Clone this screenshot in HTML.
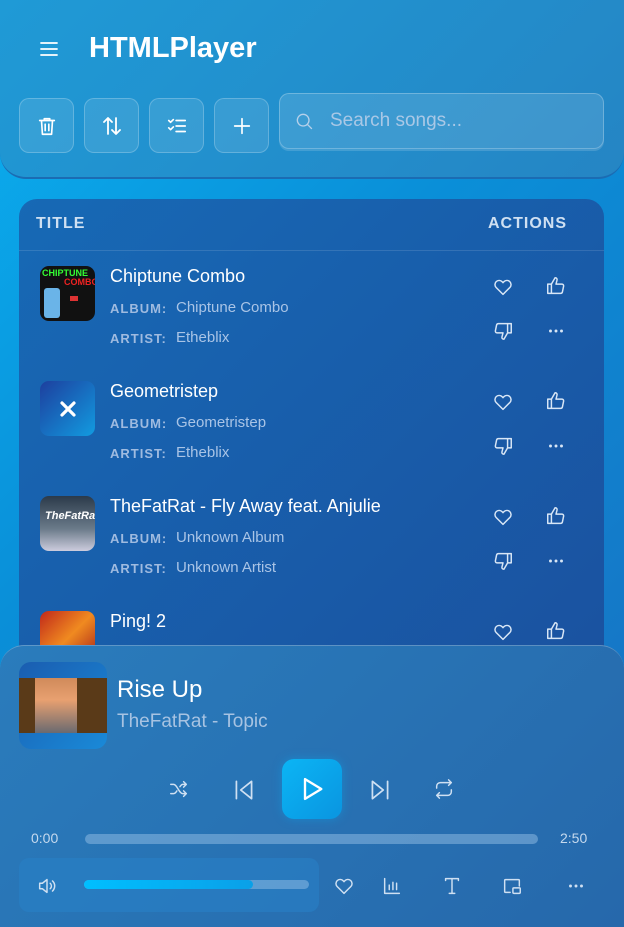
<!DOCTYPE html>
<html><head><meta charset="utf-8"><style>
*{margin:0;padding:0;box-sizing:border-box}
body{width:624px;height:927px;overflow:hidden;font-family:"Liberation Sans",sans-serif;color:#fff;background:linear-gradient(135deg,#0bb0f0 0%,#0a8fd8 40%,#1a6ec0 100%);position:relative}
.abs{position:absolute}
svg{fill:none;stroke:currentColor;stroke-width:1.6;stroke-linecap:round;stroke-linejoin:round}
.header{left:0;top:0;width:624px;height:179px;background:linear-gradient(135deg,#1f9ad6,#2585c4);border-radius:0 0 26px 26px;border-bottom:2px solid #1b6cb3}
.btn{width:55px;height:55px;top:98px;border:1px solid rgba(255,255,255,.22);background:rgba(255,255,255,.1);border-radius:10px;display:flex;align-items:center;justify-content:center;color:#fff}
.search{left:279px;top:93px;width:325px;height:56px;border:1px solid rgba(255,255,255,.25);background:rgba(255,255,255,.12);border-radius:10px;box-shadow:0 2px 0 rgba(255,255,255,.15)}
.table{left:19px;top:199px;width:585px;height:470px;background:linear-gradient(135deg,#1769b5,#1a52a0);border-radius:18px;overflow:hidden}
.th{top:16px;font-size:16px;font-weight:bold;letter-spacing:1px;color:#cfe0f2}
.row .thumb{left:21px;width:55px;height:55px;border-radius:9px;overflow:hidden}
.t{font-size:18px;color:#fff}
.lbl{font-size:13px;font-weight:bold;letter-spacing:1px;color:#9fbbe0}
.val{font-size:15px;color:#a9c4e6}
.ic{color:#d8e6f6;width:22px;height:22px}
.player{left:0;top:645px;width:624px;height:282px;background:linear-gradient(135deg,#2a7cbc,#2668ab);border-radius:24px 24px 0 0;border-top:1px solid rgba(255,255,255,.25)}
.pc{color:#cfe0f2}
</style></head><body>
<div class="abs header">
  <svg class="abs" style="left:38px;top:38px" width="22" height="22" viewBox="0 0 22 22"><path d="M3 5h16M3 11h16M3 17h16" stroke-width="1.8"/></svg>
  <div class="abs" style="left:89px;top:32px;font-size:29px;font-weight:bold">HTMLPlayer</div>
  <div class="abs btn" style="left:19px"><svg width="22" height="22" viewBox="0 0 24 24"><path d="M4 6h16M9 6V4h6v2M6 6l1 15h10l1-15M10 10v7M14 10v7" stroke-width="1.8"/></svg></div>
  <div class="abs btn" style="left:84px"><svg width="24" height="24" viewBox="0 0 24 24"><path d="M8 20V4M4 8l4-4 4 4M16 4v16M12 16l4 4 4-4" stroke-width="1.8"/></svg></div>
  <div class="abs btn" style="left:149px"><svg width="22" height="22" viewBox="0 0 24 24"><path d="M3 6l2 2 3-3M3 14l2 2 3-3M11 6h10M11 12h10M11 18h10" stroke-width="1.8"/></svg></div>
  <div class="abs btn" style="left:214px"><svg width="22" height="22" viewBox="0 0 24 24"><path d="M12 4v16M4 12h16" stroke-width="1.8"/></svg></div>
  <div class="abs search">
    <svg class="abs" style="left:14px;top:17px;color:#b5d0ea" width="20" height="20" viewBox="0 0 24 24"><circle cx="11" cy="11" r="7"/><path d="M16 16l5 5"/></svg>
    <div class="abs" style="left:50px;top:16px;font-size:19px;color:#a9c8e6">Search songs...</div>
  </div>
</div>

<div class="abs table">
  <div class="abs th" style="left:17px">TITLE</div>
  <div class="abs th" style="left:469px">ACTIONS</div>
  <div class="abs" style="left:0;top:51px;width:585px;height:1px;background:rgba(255,255,255,.12)"></div>

  <div class="abs row" style="left:0;top:67px;width:585px">
    <div class="abs thumb" style="top:0;background:#111"><div class="abs" style="left:2px;top:2px;font-size:9px;font-weight:bold;color:#3f3">CHIPTUNE</div><div class="abs" style="left:24px;top:11px;font-size:9px;font-weight:bold;color:#e22">COMBO</div><div class="abs" style="left:4px;top:22px;width:16px;height:30px;background:#6ab4e8;border-radius:3px"></div><div class="abs" style="left:30px;top:30px;width:8px;height:5px;background:#d33"></div></div>
    <div class="abs t" style="left:91px;top:0">Chiptune Combo</div>
    <div class="abs lbl" style="left:91px;top:35px">ALBUM:</div><div class="abs val" style="left:157px;top:33px">Chiptune Combo</div>
    <div class="abs lbl" style="left:91px;top:65px">ARTIST:</div><div class="abs val" style="left:157px;top:63px">Etheblix</div>
  </div>
  <div class="abs row" style="left:0;top:182px;width:585px">
    <div class="abs thumb" style="top:0;background:linear-gradient(135deg,#1d3f9e,#129be0);display:flex;align-items:center;justify-content:center"><svg width="18" height="18" viewBox="0 0 18 18" style="stroke-width:3.2"><path d="M3 3l12 12M15 3L3 15"/></svg></div>
    <div class="abs t" style="left:91px;top:0">Geometristep</div>
    <div class="abs lbl" style="left:91px;top:35px">ALBUM:</div><div class="abs val" style="left:157px;top:33px">Geometristep</div>
    <div class="abs lbl" style="left:91px;top:65px">ARTIST:</div><div class="abs val" style="left:157px;top:63px">Etheblix</div>
  </div>
  <div class="abs row" style="left:0;top:297px;width:585px">
    <div class="abs thumb" style="top:0;background:linear-gradient(180deg,#2b3a4a,#6b7b8a 60%,#ccd 100%)"><div class="abs" style="left:5px;top:14px;font-size:11px;font-style:italic;font-weight:bold;color:#fff">TheFatRat</div></div>
    <div class="abs t" style="left:91px;top:0">TheFatRat - Fly Away feat. Anjulie</div>
    <div class="abs lbl" style="left:91px;top:35px">ALBUM:</div><div class="abs val" style="left:157px;top:33px">Unknown Album</div>
    <div class="abs lbl" style="left:91px;top:65px">ARTIST:</div><div class="abs val" style="left:157px;top:63px">Unknown Artist</div>
  </div>
  <div class="abs row" style="left:0;top:412px;width:585px">
    <div class="abs thumb" style="top:0;background:linear-gradient(135deg,#c0281a,#f08a20 50%,#a01a1a)"></div>
    <div class="abs t" style="left:91px;top:0">Ping! 2</div>
  </div>

  <svg class="abs ic" style="left:473px;top:77px" viewBox="0 0 24 24"><path d="M12 20l-7.5-7.5a4.5 4.5 0 016.5-6.3L12 7.3l1-1.1a4.5 4.5 0 016.5 6.3z"/></svg>
  <svg class="abs ic" style="left:526px;top:76px" viewBox="0 0 24 24"><path d="M7 10v10H3V10zM7 10l4-7c2 0 2.5 1.5 2 3l-1 4h6.5c1.2 0 2 1 1.8 2.2l-1.3 6.3c-.2 1-1 1.5-2 1.5H7"/></svg>
  <svg class="abs ic" style="left:473px;top:121px" viewBox="0 0 24 24"><path d="M17 14V4h4v10zM17 14l-4 7c-2 0-2.5-1.5-2-3l1-4H5.5c-1.2 0-2-1-1.8-2.2L5 5.5C5.2 4.5 6 4 7 4h10"/></svg>
  <svg class="abs ic" style="left:526px;top:121px" viewBox="0 0 24 24"><circle cx="6" cy="12" r=".8" fill="currentColor"/><circle cx="12" cy="12" r=".8" fill="currentColor"/><circle cx="18" cy="12" r=".8" fill="currentColor"/></svg>

  <svg class="abs ic" style="left:473px;top:192px" viewBox="0 0 24 24"><path d="M12 20l-7.5-7.5a4.5 4.5 0 016.5-6.3L12 7.3l1-1.1a4.5 4.5 0 016.5 6.3z"/></svg>
  <svg class="abs ic" style="left:526px;top:191px" viewBox="0 0 24 24"><path d="M7 10v10H3V10zM7 10l4-7c2 0 2.5 1.5 2 3l-1 4h6.5c1.2 0 2 1 1.8 2.2l-1.3 6.3c-.2 1-1 1.5-2 1.5H7"/></svg>
  <svg class="abs ic" style="left:473px;top:236px" viewBox="0 0 24 24"><path d="M17 14V4h4v10zM17 14l-4 7c-2 0-2.5-1.5-2-3l1-4H5.5c-1.2 0-2-1-1.8-2.2L5 5.5C5.2 4.5 6 4 7 4h10"/></svg>
  <svg class="abs ic" style="left:526px;top:236px" viewBox="0 0 24 24"><circle cx="6" cy="12" r=".8" fill="currentColor"/><circle cx="12" cy="12" r=".8" fill="currentColor"/><circle cx="18" cy="12" r=".8" fill="currentColor"/></svg>

  <svg class="abs ic" style="left:473px;top:307px" viewBox="0 0 24 24"><path d="M12 20l-7.5-7.5a4.5 4.5 0 016.5-6.3L12 7.3l1-1.1a4.5 4.5 0 016.5 6.3z"/></svg>
  <svg class="abs ic" style="left:526px;top:306px" viewBox="0 0 24 24"><path d="M7 10v10H3V10zM7 10l4-7c2 0 2.5 1.5 2 3l-1 4h6.5c1.2 0 2 1 1.8 2.2l-1.3 6.3c-.2 1-1 1.5-2 1.5H7"/></svg>
  <svg class="abs ic" style="left:473px;top:351px" viewBox="0 0 24 24"><path d="M17 14V4h4v10zM17 14l-4 7c-2 0-2.5-1.5-2-3l1-4H5.5c-1.2 0-2-1-1.8-2.2L5 5.5C5.2 4.5 6 4 7 4h10"/></svg>
  <svg class="abs ic" style="left:526px;top:351px" viewBox="0 0 24 24"><circle cx="6" cy="12" r=".8" fill="currentColor"/><circle cx="12" cy="12" r=".8" fill="currentColor"/><circle cx="18" cy="12" r=".8" fill="currentColor"/></svg>

  <svg class="abs ic" style="left:473px;top:422px" viewBox="0 0 24 24"><path d="M12 20l-7.5-7.5a4.5 4.5 0 016.5-6.3L12 7.3l1-1.1a4.5 4.5 0 016.5 6.3z"/></svg>
  <svg class="abs ic" style="left:526px;top:421px" viewBox="0 0 24 24"><path d="M7 10v10H3V10zM7 10l4-7c2 0 2.5 1.5 2 3l-1 4h6.5c1.2 0 2 1 1.8 2.2l-1.3 6.3c-.2 1-1 1.5-2 1.5H7"/></svg>
</div>

<div class="abs player">
  <div class="abs" style="left:19px;top:16px;width:88px;height:87px;border-radius:12px;overflow:hidden;background:linear-gradient(135deg,#1a5db0,#1a8ad8)">
    <div class="abs" style="left:0;top:16px;width:88px;height:55px;background:#5a3a18"></div>
    <div class="abs" style="left:16px;top:16px;width:42px;height:55px;background:linear-gradient(180deg,#d08a5a,#e8a070 40%,#6a6a70)"></div>
  </div>
  <div class="abs" style="left:117px;top:30px;font-size:24px">Rise Up</div>
  <div class="abs" style="left:117px;top:65px;font-size:19px;color:#a7c3e2">TheFatRat - Topic</div>

  <svg class="abs pc" style="left:168px;top:132px" width="22" height="22" viewBox="0 0 24 24"><path d="M3 7h3c4 0 6 10 10 10h4M17 14l3 3-3 3M3 17h3c1.5 0 2.7-1.3 3.7-3M13 9.5c1-1.4 2-2.5 3-2.5h4M17 4l3 3-3 3"/></svg>
  <svg class="abs pc" style="left:231px;top:131px" width="26" height="26" viewBox="0 0 24 24"><path d="M5 4v16M19 4L9 12l10 8z"/></svg>
  <div class="abs" style="left:282px;top:113px;width:60px;height:60px;border-radius:12px;background:linear-gradient(135deg,#0bb5f5,#0a95e0);display:flex;align-items:center;justify-content:center;box-shadow:0 0 10px rgba(10,170,240,.4)"><svg width="28" height="28" viewBox="0 0 24 24" style="stroke-width:2"><path d="M6 3.5l14 8.5-14 8.5z"/></svg></div>
  <svg class="abs pc" style="left:367px;top:131px" width="26" height="26" viewBox="0 0 24 24"><path d="M19 4v16M5 4l10 8-10 8z"/></svg>
  <svg class="abs pc" style="left:433px;top:132px" width="22" height="22" viewBox="0 0 24 24"><path d="M17 2l3 3-3 3M4 11V9a4 4 0 014-4h12M7 22l-3-3 3-3M20 13v2a4 4 0 01-4 4H4"/></svg>

  <div class="abs" style="left:31px;top:184px;font-size:14px;color:#c5d9ee">0:00</div>
  <div class="abs" style="left:85px;top:188px;width:453px;height:10px;border-radius:5px;background:rgba(160,200,235,.45)"></div>
  <div class="abs" style="left:560px;top:184px;font-size:14px;color:#c5d9ee">2:50</div>

  <div class="abs" style="left:19px;top:212px;width:300px;height:54px;border-radius:10px;background:rgba(40,130,200,.55)"></div>
  <svg class="abs pc" style="left:36px;top:229px" width="22" height="22" viewBox="0 0 24 24"><path d="M4 9h3l5-4v14l-5-4H4zM15.5 9a4 4 0 010 6M18 6.5a7.5 7.5 0 010 11"/></svg>
  <div class="abs" style="left:84px;top:234px;width:225px;height:9px;border-radius:5px;background:rgba(160,200,235,.45)"></div>
  <div class="abs" style="left:84px;top:234px;width:169px;height:9px;border-radius:5px;background:linear-gradient(90deg,#00bfff,#0aa0e8)"></div>
  <svg class="abs pc" style="left:333px;top:229px" width="22" height="22" viewBox="0 0 24 24"><path d="M12 20l-7.5-7.5a4.5 4.5 0 016.5-6.3L12 7.3l1-1.1a4.5 4.5 0 016.5 6.3z"/></svg>
  <svg class="abs pc" style="left:381px;top:229px" width="22" height="22" viewBox="0 0 24 24"><path d="M4 4v16h16M9 16v-5M13 16V8M17 16v-7"/></svg>
  <svg class="abs pc" style="left:441px;top:229px" width="22" height="22" viewBox="0 0 24 24"><path d="M5 6V4h14v2M12 4v16M9 20h6"/></svg>
  <svg class="abs pc" style="left:501px;top:229px" width="22" height="22" viewBox="0 0 24 24"><path d="M10 19H5a1 1 0 01-1-1V6a1 1 0 011-1h14a1 1 0 011 1v6"/><rect x="13" y="14" width="8" height="6" rx="1"/></svg>
  <svg class="abs pc" style="left:565px;top:229px" width="22" height="22" viewBox="0 0 24 24"><circle cx="6" cy="12" r=".8" fill="currentColor"/><circle cx="12" cy="12" r=".8" fill="currentColor"/><circle cx="18" cy="12" r=".8" fill="currentColor"/></svg>
</div>
</body></html>
